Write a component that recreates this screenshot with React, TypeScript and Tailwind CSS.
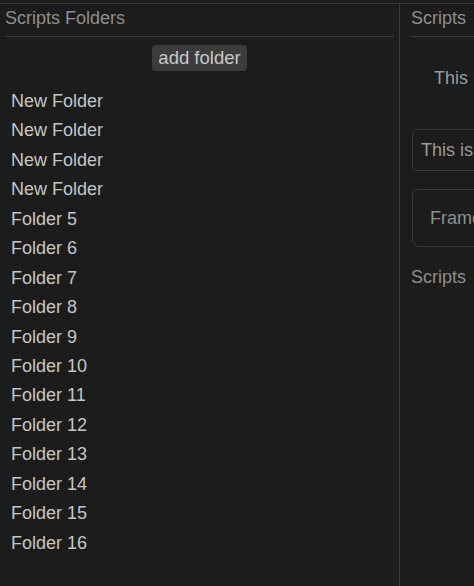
const folders = [
  "New Folder",
  "New Folder",
  "New Folder",
  "New Folder",
  "Folder 5",
  "Folder 6",
  "Folder 7",
  "Folder 8",
  "Folder 9",
  "Folder 10",
  "Folder 11",
  "Folder 12",
  "Folder 13",
  "Folder 14",
  "Folder 15",
  "Folder 16",
];

export default function App() {
  return (
    <div className="w-[474px] h-[586px] overflow-hidden bg-[#1c1c1c] pt-[3px] font-['Liberation_Sans',Arial,sans-serif]">
      <div className="flex h-full border-t border-[#3a3a3a]">
        {/* folders column */}
        <div className="w-[400px] shrink-0 border-r border-[#3a3a3a] px-[5px]">
          <div className="h-[33px] leading-[29px] text-[18px] text-[#8e8e8e] border-b border-[#3c3c3c]">
            Scripts Folders
          </div>
          <div className="flex justify-center mt-[8px]">
            <button className="h-[26px] px-[6px] rounded-[4px] bg-[#3c3c3c] text-[18.5px] leading-[26px] text-[#c8c8c8]">
              add folder
            </button>
          </div>
          <ul className="mt-[16px]">
            {folders.map((name, i) => (
              <li
                key={i}
                className="pl-[6px] h-[29.45px] leading-[29.45px] text-[18px] text-[#c6c6c6]"
              >
                {name}
              </li>
            ))}
          </ul>
        </div>

        {/* scripts column */}
        <div className="w-[400px] shrink-0 pl-[11px]">
          <div className="h-[33px] leading-[29px] text-[18px] text-[#8e8e8e] border-b border-[#3c3c3c] whitespace-nowrap">
            Scripts
          </div>
          <p className="mt-[30px] pl-[23px] text-[18px] leading-[22px] text-[#9a9a9a] whitespace-nowrap">
            This is empty
          </p>
          <div className="mt-[40px] ml-[1px] h-[42px] rounded-[5px] border border-[#3a3a3a] pl-[8px] flex items-center text-[18px] text-[#9a9a9a] whitespace-nowrap">
            This is a script
          </div>
          <div className="mt-[18px] ml-[1px] h-[58px] rounded-[7px] border border-[#3a3a3a] pl-[17px] flex items-center text-[18px] text-[#8e8e8e] whitespace-nowrap">
            Frame
          </div>
          <div className="mt-[19px] text-[18px] leading-[22px] text-[#8e8e8e] whitespace-nowrap">
            Scripts
          </div>
        </div>
      </div>
    </div>
  );
}
